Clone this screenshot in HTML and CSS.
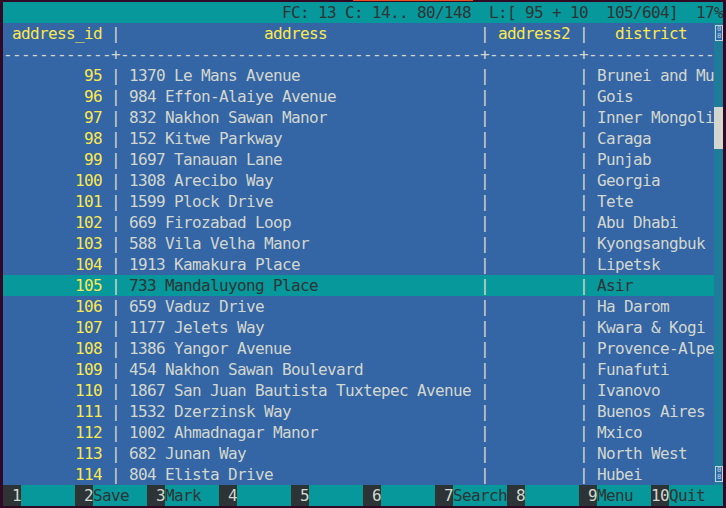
FILE: index.html
```html
<!DOCTYPE html>
<html>
<head>
<meta charset="utf-8">
<link rel="stylesheet" href="styles.css">
</head>
<body>
<div class="tab"></div>
<div class="term">
  <div class="row status"><span class="stxt">FC: 13 C: 14.. 80/148  L:[ 95 + 10  105/604]  17%</span></div>
  <div class="row head"><span class="cid">address_id</span><span class="s3"> <i>|</i> </span><span class="caddr">               address</span><span class="s2"> <i>|</i></span><span class="caddr2"> address2 </span><span class="s2"><i>|</i> </span><span class="cdist">  district</span><span class="sb box"><span class="hex">0<br>8</span></span></div>
  <div class="row"><span class="dash">------------+----------------------------------------+----------+--------------</span><span class="sb"></span></div>
  <div class="row"><span class="cid">95</span><span class="s3"> | </span><span class="caddr">1370 Le Mans Avenue</span><span class="s2"> |</span><span class="caddr2"></span><span class="s2">| </span><span class="cdist">Brunei and Mu</span><span class="sb"></span></div>
  <div class="row"><span class="cid">96</span><span class="s3"> | </span><span class="caddr">984 Effon-Alaiye Avenue</span><span class="s2"> |</span><span class="caddr2"></span><span class="s2">| </span><span class="cdist">Gois</span><span class="sb"></span></div>
  <div class="row"><span class="cid">97</span><span class="s3"> | </span><span class="caddr">832 Nakhon Sawan Manor</span><span class="s2"> |</span><span class="caddr2"></span><span class="s2">| </span><span class="cdist">Inner Mongoli</span><span class="sb thumb"></span></div>
  <div class="row"><span class="cid">98</span><span class="s3"> | </span><span class="caddr">152 Kitwe Parkway</span><span class="s2"> |</span><span class="caddr2"></span><span class="s2">| </span><span class="cdist">Caraga</span><span class="sb thumb"></span></div>
  <div class="row"><span class="cid">99</span><span class="s3"> | </span><span class="caddr">1697 Tanauan Lane</span><span class="s2"> |</span><span class="caddr2"></span><span class="s2">| </span><span class="cdist">Punjab</span><span class="sb"></span></div>
  <div class="row"><span class="cid">100</span><span class="s3"> | </span><span class="caddr">1308 Arecibo Way</span><span class="s2"> |</span><span class="caddr2"></span><span class="s2">| </span><span class="cdist">Georgia</span><span class="sb"></span></div>
  <div class="row"><span class="cid">101</span><span class="s3"> | </span><span class="caddr">1599 Plock Drive</span><span class="s2"> |</span><span class="caddr2"></span><span class="s2">| </span><span class="cdist">Tete</span><span class="sb"></span></div>
  <div class="row"><span class="cid">102</span><span class="s3"> | </span><span class="caddr">669 Firozabad Loop</span><span class="s2"> |</span><span class="caddr2"></span><span class="s2">| </span><span class="cdist">Abu Dhabi</span><span class="sb"></span></div>
  <div class="row"><span class="cid">103</span><span class="s3"> | </span><span class="caddr">588 Vila Velha Manor</span><span class="s2"> |</span><span class="caddr2"></span><span class="s2">| </span><span class="cdist">Kyongsangbuk</span><span class="sb"></span></div>
  <div class="row"><span class="cid">104</span><span class="s3"> | </span><span class="caddr">1913 Kamakura Place</span><span class="s2"> |</span><span class="caddr2"></span><span class="s2">| </span><span class="cdist">Lipetsk</span><span class="sb"></span></div>
  <div class="row sel"><span class="cid">105</span><span class="s3"> | </span><span class="caddr">733 Mandaluyong Place</span><span class="s2"> |</span><span class="caddr2"></span><span class="s2">| </span><span class="cdist">Asir</span><span class="sb"></span></div>
  <div class="row"><span class="cid">106</span><span class="s3"> | </span><span class="caddr">659 Vaduz Drive</span><span class="s2"> |</span><span class="caddr2"></span><span class="s2">| </span><span class="cdist">Ha Darom</span><span class="sb"></span></div>
  <div class="row"><span class="cid">107</span><span class="s3"> | </span><span class="caddr">1177 Jelets Way</span><span class="s2"> |</span><span class="caddr2"></span><span class="s2">| </span><span class="cdist">Kwara &amp; Kogi</span><span class="sb"></span></div>
  <div class="row"><span class="cid">108</span><span class="s3"> | </span><span class="caddr">1386 Yangor Avenue</span><span class="s2"> |</span><span class="caddr2"></span><span class="s2">| </span><span class="cdist">Provence-Alpe</span><span class="sb"></span></div>
  <div class="row"><span class="cid">109</span><span class="s3"> | </span><span class="caddr">454 Nakhon Sawan Boulevard</span><span class="s2"> |</span><span class="caddr2"></span><span class="s2">| </span><span class="cdist">Funafuti</span><span class="sb"></span></div>
  <div class="row"><span class="cid">110</span><span class="s3"> | </span><span class="caddr">1867 San Juan Bautista Tuxtepec Avenue</span><span class="s2"> |</span><span class="caddr2"></span><span class="s2">| </span><span class="cdist">Ivanovo</span><span class="sb"></span></div>
  <div class="row"><span class="cid">111</span><span class="s3"> | </span><span class="caddr">1532 Dzerzinsk Way</span><span class="s2"> |</span><span class="caddr2"></span><span class="s2">| </span><span class="cdist">Buenos Aires</span><span class="sb"></span></div>
  <div class="row"><span class="cid">112</span><span class="s3"> | </span><span class="caddr">1002 Ahmadnagar Manor</span><span class="s2"> |</span><span class="caddr2"></span><span class="s2">| </span><span class="cdist">Mxico</span><span class="sb"></span></div>
  <div class="row"><span class="cid">113</span><span class="s3"> | </span><span class="caddr">682 Junan Way</span><span class="s2"> |</span><span class="caddr2"></span><span class="s2">| </span><span class="cdist">North West</span><span class="sb"></span></div>
  <div class="row"><span class="cid">114</span><span class="s3"> | </span><span class="caddr">804 Elista Drive</span><span class="s2"> |</span><span class="caddr2"></span><span class="s2">| </span><span class="cdist">Hubei</span><span class="sb box"><span class="hex">0<br>8</span></span></div>
  <div class="row foot"><span class="fk">1</span><span class="fl"></span><span class="fk">2</span><span class="fl">Save</span><span class="fk">3</span><span class="fl">Mark</span><span class="fk">4</span><span class="fl"></span><span class="fk">5</span><span class="fl"></span><span class="fk">6</span><span class="fl"></span><span class="fk">7</span><span class="fl">Search</span><span class="fk">8</span><span class="fl"></span><span class="fk">9</span><span class="fl">Menu</span><span class="fk">10</span><span class="fl">Quit</span></div>
</div>
</body>
</html>
```
FILE: styles.css
```css
html, body {
  margin: 0;
  padding: 0;
}
body {
  background: #300a24;
  width: 726px;
  height: 508px;
  overflow: hidden;
  position: relative;
}
.tab {
  position: absolute;
  top: 0;
  left: 353px;
  width: 120px;
  height: 1px;
  background: #e95420;
}
.term {
  padding: 2px 3px;
  width: 720px;
  font-family: "DejaVu Sans Mono", monospace;
  font-size: 16px;
  letter-spacing: -0.6328px;
  line-height: 21px;
  color: #d3d7cf;
}
.row {
  display: flex;
  height: 21px;
  background: #3465a4;
  overflow: hidden;
}
.row > span {
  flex: none;
  overflow: hidden;
  height: 21px;
  white-space: pre;
}
.status {
  background: #06989a;
  color: #2e3436;
  justify-content: flex-end;
}
.head { color: #fce94f; }
.head i { font-style: normal; color: #d3d7cf; }
.cid { width: 99px; text-align: right; color: #fce94f; }
.s3 { width: 27px; }
.s2 { width: 18px; }
.caddr { width: 342px; }
.caddr2 { width: 90px; }
.cdist { width: 117px; }
.dash { width: 711px; }
.sb {
  width: 9px;
  background: #1e7b99;
  position: relative;
}
.sb.thumb { background: #d3d7cf; }
.hex {
  position: absolute;
  left: 1px;
  top: 2px;
  width: 8px;
  height: 16px;
  box-sizing: border-box;
  border: 1px solid #c9d1db;
  font-size: 7px;
  line-height: 7px;
  letter-spacing: 0;
  padding-left: 1px;
  color: #c9d1db;
  background: #2a6aa8;
}
.sel { background: #06989a; }
.sel .caddr, .sel .cdist { color: #2e3436; }
.foot { background: #06989a; }
.fk {
  width: 18px;
  text-align: right;
  background: #2e3436;
  color: #d3d7cf;
}
.fl {
  width: 54px;
  color: #2e3436;
}
```
